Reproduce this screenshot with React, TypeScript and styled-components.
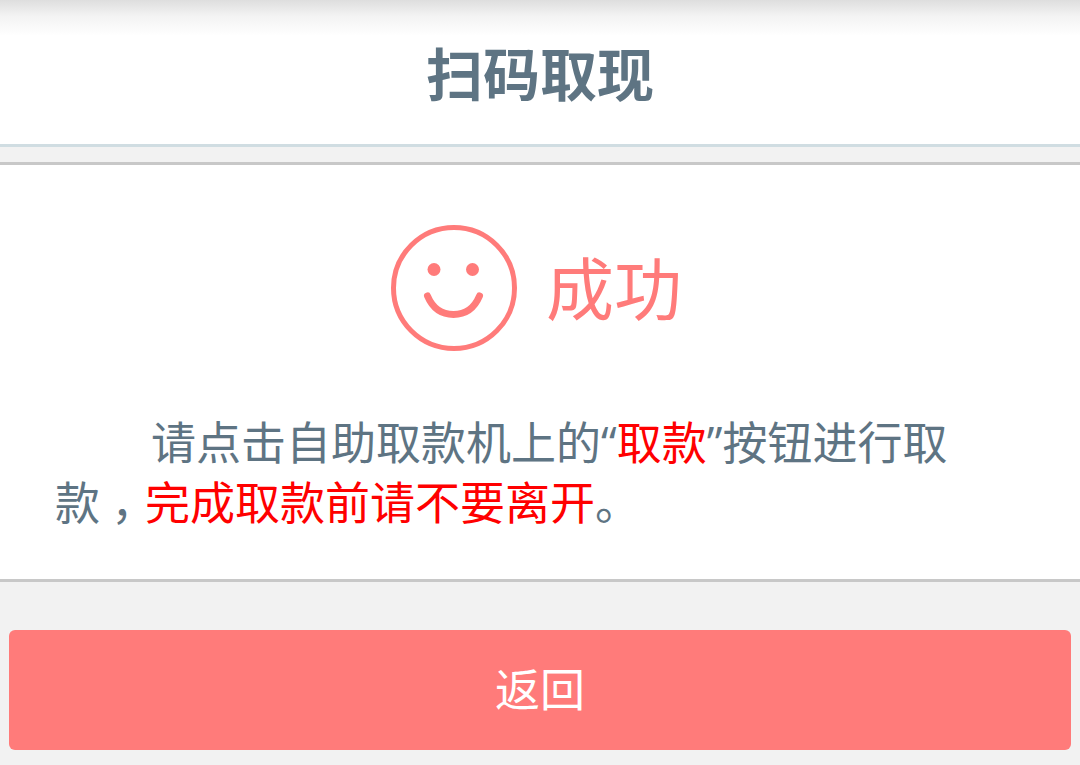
import React from "react";
import styled, { createGlobalStyle } from "styled-components";

const slate = "#5e7483";
const coral = "#ff7b7a";

const GlobalStyle = createGlobalStyle`
  * { box-sizing: border-box; }
  body {
    margin: 0;
    background: #f2f2f2;
    color: ${slate};
    font-family: "Open Sans", "Noto Sans CJK SC", sans-serif;
    font-size: 45px;
    line-height: 60px;
  }
`;

const Header = styled.header`
  padding: 38px 55px 34px;
  border-bottom: 3px solid #d0dde2;
  background: linear-gradient(#dedede, #f3f3f3 16px, #fff 36px) #fff;
`;

const Title = styled.h1`
  margin: 0;
  text-align: center;
  font-size: 57px;
  line-height: 72px;
  font-weight: 700;
`;

const Card = styled.main`
  margin-top: 15px;
  padding: 60px 55px 46px;
  border: solid #c8c8c8;
  border-width: 3px 0;
  background: #fff;
`;

const Status = styled.div`
  display: flex;
  align-items: center;
  justify-content: center;
  gap: 28px;
  margin-bottom: 60px;
  padding-right: 8px;
  color: ${coral};
`;

const Face = styled.svg`
  width: 128px;
  height: 128px;
  flex: none;
`;

const StatusText = styled.h2`
  margin: 0;
  font-size: 68px;
  line-height: 72px;
  font-weight: 400;
`;

const Message = styled.p`
  margin: 0;
  text-indent: 96px;
`;

const Highlight = styled.span`
  color: #f00;
`;

const KeepTogether = styled.span`
  white-space: nowrap;
`;

const CenteredMark = styled.span`
  display: inline-block;
  width: 1em;
  text-align: center;
  text-indent: 0;
  font-feature-settings: "halt";
`;

const Actions = styled.div`
  padding: 48px 9px 15px;
`;

const BackButton = styled.button`
  display: block;
  width: 100%;
  padding: 30px;
  border: 0;
  border-radius: 6px;
  background: ${coral};
  color: #fff;
  font: inherit;
  cursor: pointer;
`;

export default function App() {
  return (
    <>
      <GlobalStyle />
      <Header>
        <Title>扫码取现</Title>
      </Header>
      <Card>
        <Status>
          <Face viewBox="0 0 128 128" fill="none" stroke="currentColor" aria-hidden="true">
            <circle cx="64" cy="63" r="60.500" strokeWidth="5" />
            <circle cx="44" cy="44.500" r="6.500" fill="currentColor" stroke="none" />
            <circle cx="82.500" cy="44.500" r="6.500" fill="currentColor" stroke="none" />
            <path d="M37.500 71C43 84 52 89.500 63.500 89.500S84 84 89.500 71" strokeWidth="7" strokeLinecap="round" />
          </Face>
          <StatusText>成功</StatusText>
        </Status>
        <Message lang="zh-CN">
          请点击自助取款机上的“<Highlight>取款</Highlight>”按钮进行取
          <KeepTogether>款<CenteredMark>，</CenteredMark></KeepTogether>
          <Highlight>完成取款前请不要离开</Highlight>。
        </Message>
      </Card>
      <Actions>
        <BackButton type="button">返回</BackButton>
      </Actions>
    </>
  );
}
